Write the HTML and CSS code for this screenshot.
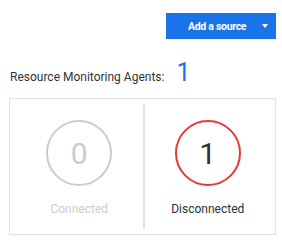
FILE: index.html
```html
<!DOCTYPE html>
<html lang="en">
<head>
    <meta charset="UTF-8">
    <title>Resource Monitoring Agents</title>
    <link rel="stylesheet" href="styles.css">
</head>
<body>
    <div class="panel">
        <div class="toolbar">
            <button class="add-button">
                <span class="add-label">Add a source</span>
                <span class="caret"></span>
            </button>
        </div>

        <div class="summary">
            <span class="summary-title">Resource Monitoring Agents:</span>
            <span class="summary-count">1</span>
        </div>

        <div class="status-card">
            <div class="status-cell connected">
                <div class="status-ring">0</div>
                <div class="status-label">Connected</div>
            </div>
            <div class="status-cell disconnected">
                <div class="status-ring">1</div>
                <div class="status-label">Disconnected</div>
            </div>
        </div>
    </div>
</body>
</html>
```

FILE: styles.css
```css
body {
    font-family: 'Roboto', sans-serif;
    background-color: #fff;
    margin: 0;
    padding: 0;
}
.panel {
    padding: 13px 6px 0 9px;
}
.toolbar {
    display: flex;
    justify-content: flex-end;
}
.add-button {
    display: flex;
    align-items: center;
    width: 110px;
    height: 26px;
    padding: 0 8px 0 22px;
    border: none;
    border-radius: 0;
    background-color: #1a73e8;
    color: #fff;
    font-family: 'Roboto', sans-serif;
    font-size: 10.5px;
    font-weight: 700;
    letter-spacing: -0.3px;
    cursor: pointer;
}
.add-label {
    flex: 1;
    text-align: left;
}
.caret {
    width: 0;
    height: 0;
    border-left: 3px solid transparent;
    border-right: 3px solid transparent;
    border-top: 4px solid #fff;
}
.summary {
    display: flex;
    align-items: baseline;
    gap: 12px;
    margin-top: 24px;
    padding-left: 1px;
}
.summary-title {
    font-size: 12px;
    color: #333;
}
.summary-count {
    font-size: 25px;
    color: #1a73e8;
    line-height: 20px;
}
.status-card {
    display: flex;
    margin-top: 14px;
    height: 137px;
    border: 1px solid #e0e0e0;
    box-sizing: border-box;
}
.status-cell {
    flex: 1;
    display: flex;
    flex-direction: column;
    align-items: center;
    padding-top: 21px;
}
.connected {
    border-right: 2px solid #e0e0e0;
    margin: 5px 0;
    padding-top: 16px;
    padding-left: 6px;
}
.disconnected {
    padding-right: 4px;
}
.status-ring {
    width: 62px;
    height: 62px;
    border-radius: 50%;
    border: 2px solid #ccc;
    display: flex;
    align-items: center;
    justify-content: center;
    font-size: 30px;
    color: #ccc;
}
.disconnected .status-ring {
    border-color: #e53935;
    color: #263238;
}
.status-label {
    margin-top: 16px;
    font-size: 12px;
    color: #ccc;
}
.disconnected .status-label {
    color: #263238;
}
```
